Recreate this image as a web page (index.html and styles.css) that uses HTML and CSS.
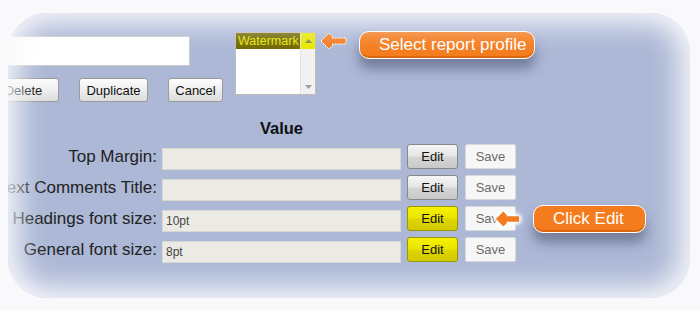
FILE: index.html
```html
<!DOCTYPE html>
<html lang="en">
<head>
  <meta charset="UTF-8">
  <title>Report profile settings</title>
  <link rel="stylesheet" href="styles.css">
</head>
<body>
  <div class="shot">
    <div class="top">
      <div class="profile">
        <input type="text" class="name">
        <div class="actions">
          <button class="btn btn-delete">Delete</button>
          <button class="btn btn-duplicate">Duplicate</button>
          <button class="btn btn-cancel">Cancel</button>
        </div>
      </div>

      <div class="listbox">
        <div class="options">
          <div class="option selected">Watermark</div>
        </div>
        <div class="scrollbar">
          <span class="scroll-up"><svg width="7" height="4" viewBox="0 0 7 4"><path d="M0 4 L3.5 0 L7 4 Z" fill="#8a8a5a"/></svg></span>
          <span class="track"></span>
          <span class="scroll-down"><svg width="7" height="4" viewBox="0 0 7 4"><path d="M0 0 L7 0 L3.5 4 Z" fill="#a0a0a0"/></svg></span>
        </div>
      </div>

      <div class="hint hint-profile">
        <svg class="arrow" width="27" height="20" viewBox="0 0 27 20">
          <path d="M1 10 L9 2 L13 6 L12 7 L26 7 L26 13 L12 13 L13 14 L9 18 Z" fill="#f47b20" stroke="#fff" stroke-width="1" stroke-dasharray="2 1"/>
        </svg>
        <span class="callout callout-profile">Select report profile</span>
      </div>
    </div>

    <div class="values">
      <div class="values-head">Value</div>
      <div class="rows">
        <div class="row">
          <label class="label">Top Margin:</label>
          <input type="text" class="field" value="" readonly>
          <button class="edit">Edit</button>
          <button class="save">Save</button>
        </div>
        <div class="row">
          <label class="label">Text Comments Title:</label>
          <input type="text" class="field" value="" readonly>
          <button class="edit">Edit</button>
          <button class="save">Save</button>
        </div>
        <div class="row">
          <label class="label">Headings font size:</label>
          <input type="text" class="field" value="10pt" readonly>
          <button class="edit edit-active">Edit</button>
          <button class="save">Save</button>
          <div class="hint hint-edit">
            <svg class="arrow arrow-glow" width="25" height="20" viewBox="0 0 27 20">
              <path d="M1 10 L9 2 L13 6 L12 7 L26 7 L26 13 L12 13 L13 14 L9 18 Z" fill="#f47b20"/>
            </svg>
            <span class="callout callout-edit">Click Edit</span>
          </div>
        </div>
        <div class="row">
          <label class="label">General font size:</label>
          <input type="text" class="field" value="8pt" readonly>
          <button class="edit edit-active">Edit</button>
          <button class="save">Save</button>
        </div>
      </div>
    </div>
  </div>
</body>
</html>
```

FILE: styles.css
```css
body {
  margin: 0;
  background-color: #f9f9fb;
  font-family: "Liberation Sans", Arial, sans-serif;
  color: #222;
}
.shot {
  position: relative;
  width: 700px;
  height: 310px;
  overflow: hidden;
  background-color: #acb8d6;
}
/* feathered edge of the screenshot, drawn over the content */
.shot::after {
  content: "";
  position: absolute;
  top: 13px;
  left: 8px;
  right: 10px;
  bottom: 12px;
  border-radius: 40px;
  box-shadow: 0 0 0 80px #f9f9fb, inset 0 0 28px 10px #f9f9fb;
  pointer-events: none;
}
.top {
  display: flex;
  align-items: flex-start;
  padding-top: 31px;
}
.profile {
  margin-left: -12px;
  margin-top: 5px;
}
.name {
  display: block;
  width: 202px;
  height: 30px;
  margin: 0;
  box-sizing: border-box;
  border: 1px solid #c9c9c9;
  background-color: #fff;
}
.actions {
  display: flex;
  gap: 20px;
  margin-top: 12px;
}
.btn {
  height: 24px;
  padding: 0;
  font-family: inherit;
  font-size: 13px;
  color: #111;
  border: 1px solid #9a9a9a;
  border-radius: 3px;
  background: linear-gradient(#fdfdfd, #eeeeee 50%, #dcdcdc);
}
.btn-delete { width: 71px; }
.btn-duplicate { width: 69px; }
.btn-cancel { width: 55px; }
.listbox {
  display: flex;
  width: 81px;
  height: 63px;
  margin-left: 12px;
  margin-top: 1px;
  box-sizing: border-box;
  border: 1px solid #bdbdb2;
  background-color: #fff;
}
.options {
  flex: 1;
  min-width: 0;
}
.option {
  height: 16px;
  line-height: 16px;
  padding-left: 2px;
  font-size: 12.5px;
  white-space: nowrap;
}
.option.selected {
  background-color: #6f6800;
  color: #e6e600;
}
.scrollbar {
  display: flex;
  flex-direction: column;
  width: 14px;
  background-color: #f1f1f1;
  border-left: 1px solid #e2e2e2;
}
.scroll-up, .scroll-down {
  display: flex;
  justify-content: center;
  align-items: center;
  height: 15px;
}
.scroll-up {
  height: 16px;
  background-color: #e8e800;
}
.track {
  flex: 1;
}
.hint {
  display: flex;
  align-items: flex-start;
}
.hint-profile {
  margin-left: 4px;
}
.arrow {
  display: block;
  flex: none;
}
.arrow-glow {
  filter: drop-shadow(0 0 2px #fff) drop-shadow(0 0 2px #fff) drop-shadow(0 0 1px #fff);
}
.callout {
  height: 28px;
  box-sizing: border-box;
  border: 1px solid #fff;
  border-radius: 10px;
  background-color: #f47c1e;
  color: #fff;
  font-size: 17px;
  line-height: 26px;
  padding-left: 19px;
  white-space: nowrap;
  box-shadow: inset 0 -2px 0 #dc680e, 0 10px 12px rgba(60, 70, 100, 0.5);
}
.callout-profile {
  width: 176px;
  margin-left: 12px;
}
.values {
  margin-top: 17px;
}
.values-head {
  width: 239px;
  margin-left: 162px;
  text-align: center;
  font-weight: bold;
  font-size: 16.5px;
  line-height: 18px;
  color: #111;
}
.rows {
  display: grid;
  row-gap: 6px;
  margin-top: 7px;
}
.row {
  display: flex;
  align-items: center;
  height: 25px;
}
.label {
  display: flex;
  justify-content: flex-end;
  flex: none;
  width: 157px;
  white-space: nowrap;
  font-size: 17px;
  color: #222;
}
.field {
  flex: none;
  align-self: flex-end;
  width: 239px;
  height: 22px;
  margin: 0 0 -1px 5px;
  padding: 0 3px;
  box-sizing: border-box;
  border: 1px solid #d9d9d1;
  background-color: #ebeae4;
  font-family: inherit;
  font-size: 12px;
  color: #444;
}
.edit, .save {
  flex: none;
  width: 51px;
  height: 25px;
  padding: 0;
  font-family: inherit;
  font-size: 13px;
}
.edit {
  margin-left: 6px;
  color: #111;
  border: 1px solid #888;
  border-radius: 3px;
  background: linear-gradient(#f6f6f6, #e6e6e6 45%, #d4d4d4 55%, #c9c9c9);
}
.edit-active {
  border-color: #9c9600;
  background: linear-gradient(#f6f000, #ece600 45%, #dcd600 55%, #d0ca00);
}
.save {
  margin-left: 7px;
  color: #6a6a6a;
  border: 1px solid #d9d9d9;
  border-radius: 2px;
  background-color: #f7f7f7;
}
.hint-edit {
  align-items: center;
  margin-left: -21px;
}
.callout-edit {
  width: 113px;
  margin-left: 13px;
}
```
